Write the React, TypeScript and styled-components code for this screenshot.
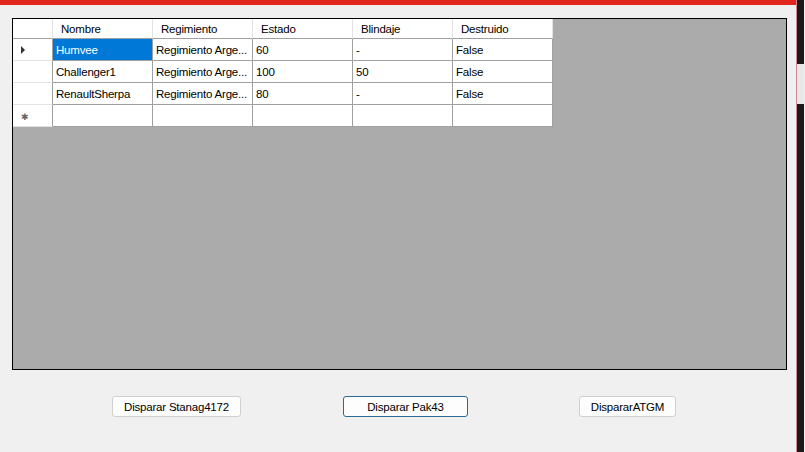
import React from "react";
import styled, { createGlobalStyle } from "styled-components";

const Global = createGlobalStyle`
  html, body { margin: 0; padding: 0; background: #f0f0f0; }
  body { font-family: "Segoe UI", "Liberation Sans", Arial, sans-serif; font-size: 11.5px; letter-spacing: -0.2px; color: #000; }
  * { box-sizing: border-box; }
`;

const Screen = styled.div`
  width: 805px;
  height: 452px;
  display: flex;
  overflow: hidden;
`;

const Window = styled.div`
  width: 797px;
  height: 452px;
  display: flex;
  flex-direction: column;
  background: #f0f0f0;
  border-right: 1px solid #c98b8b;
`;

const TitleBar = styled.div`
  height: 5px;
  background: #e0261d;
  flex: none;
`;

const Body = styled.div`
  flex: 1;
  padding: 13px 0 0 12px;
  display: flex;
  flex-direction: column;
`;

const GridView = styled.div`
  width: 775px;
  height: 352px;
  border: 1px solid #000;
  background: #ababab;
  flex: none;
`;

const Table = styled.div`
  display: grid;
  grid-template-columns: 40px repeat(5, 100px);
  grid-template-rows: 20px repeat(4, 22px);
  width: 540px;
`;

const HeaderCell = styled.div`
  background: #fff;
  border-right: 1px solid #e3e3e3;
  border-bottom: 1px solid #a0a0a0;
  padding: 1px 0 0 8px;
  display: flex;
  align-items: center;
  white-space: nowrap;
`;

const RowHeader = styled.div`
  background: #fff;
  border-right: 1px solid #a0a0a0;
  border-bottom: 1px solid #e3e3e3;
  display: flex;
  align-items: center;
  padding-left: 6px;
`;

const Cell = styled.div<{ $selected?: boolean }>`
  background: ${(p) => (p.$selected ? "#0078d7" : "#fff")};
  color: ${(p) => (p.$selected ? "#fff" : "#000")};
  border-right: 1px solid #a0a0a0;
  border-bottom: 1px solid #a0a0a0;
  padding: 1px 0 0 3px;
  display: flex;
  align-items: center;
  white-space: nowrap;
  overflow: hidden;
`;

const Arrow = styled.div`
  width: 0;
  height: 0;
  border-top: 4px solid transparent;
  border-bottom: 4px solid transparent;
  border-left: 4px solid #333;
  margin-left: 2px;
`;

const Star = styled.span`
  font-size: 9px;
  color: #666;
  margin-left: 2px;
  margin-top: 2px;
`;

const ButtonRow = styled.div`
  display: flex;
  padding-top: 26px;
`;

const Button = styled.button<{ $left: number; $width: number; $focused?: boolean }>`
  margin-left: ${(p) => p.$left}px;
  width: ${(p) => p.$width}px;
  height: 21px;
  background: #fdfdfd;
  border: 1px solid ${(p) => (p.$focused ? "#2a6a93" : "#d0d0d0")};
  border-radius: 3px;
  font-family: inherit;
  font-size: 11.5px;
  letter-spacing: -0.2px;
  color: #000;
  padding: 0;
`;

const SideStrip = styled.div`
  width: 7px;
  height: 452px;
  background: #1d1819;
  display: flex;
  flex-direction: column;
`;

const SidePiece = styled.div`
  margin-top: 64px;
  height: 40px;
  background: #e8e8e8;
`;

const rows = [
  ["Humvee", "Regimiento Arge...", "60", "-", "False"],
  ["Challenger1", "Regimiento Arge...", "100", "50", "False"],
  ["RenaultSherpa", "Regimiento Arge...", "80", "-", "False"],
];

const headers = ["Nombre", "Regimiento", "Estado", "Blindaje", "Destruido"];

export default function App() {
  return (
    <Screen>
      <Global />
      <Window>
        <TitleBar />
        <Body>
          <GridView>
            <Table>
              <HeaderCell />
              {headers.map((h) => (
                <HeaderCell key={h}>{h}</HeaderCell>
              ))}
              {rows.map((r, i) => (
                <React.Fragment key={i}>
                  <RowHeader>{i === 0 ? <Arrow /> : null}</RowHeader>
                  {r.map((c, j) => (
                    <Cell key={j} $selected={i === 0 && j === 0}>
                      {c}
                    </Cell>
                  ))}
                </React.Fragment>
              ))}
              <RowHeader>
                <Star>✱</Star>
              </RowHeader>
              {headers.map((h) => (
                <Cell key={h} />
              ))}
            </Table>
          </GridView>
          <ButtonRow>
            <Button $left={100} $width={129}>Disparar Stanag4172</Button>
            <Button $left={102} $width={125} $focused>Disparar Pak43</Button>
            <Button $left={111} $width={97}>DispararATGM</Button>
          </ButtonRow>
        </Body>
      </Window>
      <SideStrip>
        <SidePiece />
      </SideStrip>
    </Screen>
  );
}
